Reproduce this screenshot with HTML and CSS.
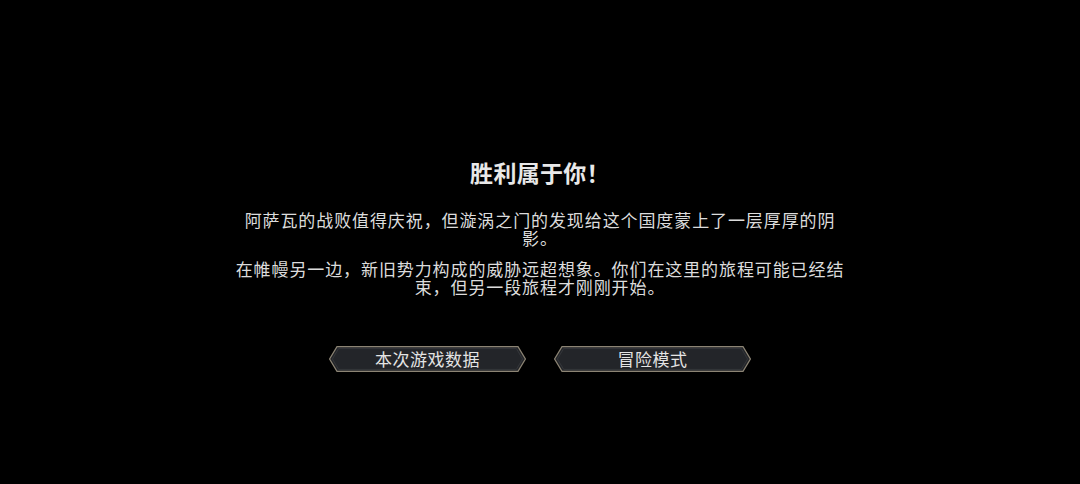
FILE: index.html
```html
<!DOCTYPE html>
<html lang="zh-CN">
<head>
<meta charset="utf-8">
<title>胜利属于你！</title>
<link rel="stylesheet" href="styles.css">
</head>
<body>
<main class="screen">
  <h1 class="title">胜利属于你！</h1>
  <div class="story">
    <p class="para">阿萨瓦的战败值得庆祝，但漩涡之门的发现给这个国度蒙上了一层厚厚的阴影。</p>
    <p class="para">在帷幔另一边，新旧势力构成的威胁远超想象。你们在这里的旅程可能已经结束，但另一段旅程才刚刚开始。</p>
  </div>
  <div class="actions">
    <button class="btn" type="button">
      <svg class="btn-bg" viewBox="0 0 197 26" width="197" height="26" aria-hidden="true">
        <polygon points="8,0.6 189,0.6 196.4,13 189,25.4 8,25.4 0.6,13" fill="#232529" stroke="#8c8474" stroke-width="1.2"/>
        <polygon points="9.6,2.6 187.4,2.6 193.6,13 187.4,23.4 9.6,23.4 3.4,13" fill="none" stroke="#34363a" stroke-width="1"/>
      </svg>
      <span class="btn-label">本次游戏数据</span>
    </button>
    <button class="btn" type="button">
      <svg class="btn-bg" viewBox="0 0 197 26" width="197" height="26" aria-hidden="true">
        <polygon points="8,0.6 189,0.6 196.4,13 189,25.4 8,25.4 0.6,13" fill="#232529" stroke="#8c8474" stroke-width="1.2"/>
        <polygon points="9.6,2.6 187.4,2.6 193.6,13 187.4,23.4 9.6,23.4 3.4,13" fill="none" stroke="#34363a" stroke-width="1"/>
      </svg>
      <span class="btn-label">冒险模式</span>
    </button>
  </div>
</main>
</body>
</html>
```

FILE: styles.css
```css
html, body {
  margin: 0;
  padding: 0;
  background: #000;
}

body {
  width: 1080px;
  height: 484px;
  overflow: hidden;
  font-family: "Noto Sans CJK SC", "Noto Sans", sans-serif;
  color: #dadada;
}

.screen {
  display: flex;
  flex-direction: column;
  align-items: center;
  padding-top: 157px;
}

.title {
  margin: 0;
  font-size: 23px;
  line-height: 30px;
  font-weight: 700;
  color: #e8e8e8;
  letter-spacing: 0.3px;
}

.story {
  width: 620px;
  margin-top: 24px;
  display: flex;
  flex-direction: column;
  gap: 13px;
}

.para {
  margin: 0;
  font-size: 17px;
  line-height: 18px;
  letter-spacing: 0.9px;
  text-align: center;
  color: #dcdcdc;
}

.actions {
  margin-top: 50px;
  display: flex;
  gap: 28px;
}

.btn {
  position: relative;
  width: 197px;
  height: 26px;
  padding: 0;
  border: 0;
  background: transparent;
  cursor: pointer;
  font-family: inherit;
}

.btn-bg {
  position: absolute;
  left: 0;
  top: 0;
  display: block;
}

.btn-label {
  position: relative;
  display: block;
  font-size: 17px;
  line-height: 26px;
  letter-spacing: 0.5px;
  color: #e4e4e4;
  text-align: center;
}
```
